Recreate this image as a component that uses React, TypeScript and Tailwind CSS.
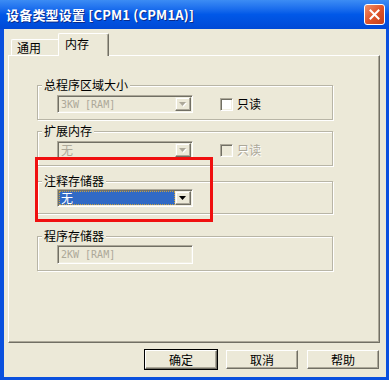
import React from 'react'

const ui = "font-['Noto_Sans_CJK_SC',sans-serif] text-[12px] leading-[16px]"
const mono = "font-['DejaVu_Sans_Mono',monospace] text-[10px]"

const DropArrow = ({ disabled }: { disabled?: boolean }) => (
  <div className="flex h-full w-[16px] items-center justify-center border border-t-[#F1EFE2] border-l-[#F1EFE2] border-b-[#716F64] border-r-[#716F64] bg-[#ECE9D8] shadow-[inset_-1px_-1px_0_#ACA899,inset_1px_1px_0_#fff]">
    <svg width="8" height="5" viewBox="0 0 8 5">
      {disabled && <path d="M1 1h7L4.5 5z" fill="#fff" />}
      <path d="M0 0h7L3.5 4z" fill={disabled ? '#ACA899' : '#000'} />
    </svg>
  </div>
)

const Sunken = ({ children, className }: { children: React.ReactNode; className?: string }) => (
  <div
    className={`flex border border-t-[#ACA899] border-l-[#ACA899] border-b-white border-r-white shadow-[inset_1px_1px_0_#716F64,inset_-1px_-1px_0_#F1EFE2] p-[1px] ${className ?? ''}`}
  >
    {children}
  </div>
)

const Combo = ({ value, disabled, focused }: { value: string; disabled?: boolean; focused?: boolean }) => (
  <Sunken className={`h-[18px] w-[136px] ${focused ? 'bg-white' : 'bg-[#ECE9D8]'}`}>
    {focused ? (
      <div className={`flex flex-1 items-center border border-dotted border-[#C8A040] bg-[#316AC5] pl-[1px] text-white ${ui}`}>
        {value}
      </div>
    ) : (
      <div className={`flex flex-1 items-center pl-[2px] text-[#ACA899] ${value.match(/[A-Z]/) ? mono : ui}`}>
        {value}
      </div>
    )}
    <DropArrow disabled={disabled} />
  </Sunken>
)

const Check = ({ disabled }: { disabled?: boolean }) => (
  <div className="flex items-center gap-[4px]">
    <div
      className={`h-[13px] w-[13px] border border-t-[#ACA899] border-l-[#ACA899] border-b-white border-r-white shadow-[inset_1px_1px_0_#716F64,inset_-1px_-1px_0_#F1EFE2] ${disabled ? 'bg-[#ECE9D8]' : 'bg-white'}`}
    />
    <span className={`${ui} ${disabled ? 'text-[#ACA899] [text-shadow:1px_1px_0_#fff]' : 'text-black'}`}>只读</span>
  </div>
)

const Group = ({ label, children, className }: { label: string; children: React.ReactNode; className?: string }) => (
  <fieldset
    className={`ml-[28px] w-[296px] border border-[#B8B5A6] shadow-[inset_1px_1px_0_#fff,1px_1px_0_#fff] ${className ?? ''}`}
  >
    <legend className={`ml-[4px] bg-[#ECE9D8] px-[2px] ${ui} text-black`}>{label}</legend>
    {children}
  </fieldset>
)

const Button = ({ label, def }: { label: string; def?: boolean }) => (
  <div className={def ? 'border border-black' : 'border border-transparent'}>
    <div
      className={`flex h-[19px] w-[72px] items-center justify-center border border-t-white border-l-white border-b-[#716F64] border-r-[#716F64] bg-[#ECE9D8] shadow-[inset_-1px_-1px_0_#ACA899] ${ui} text-black`}
    >
      {label}
    </div>
  </div>
)

export default function App() {
  return (
    <div className="flex h-[380px] w-[389px] flex-col bg-[#0A50DE]">
      <div className="flex h-[29px] items-center justify-between bg-linear-to-b from-[#3C8CF4] via-[#0158E8] to-[#0049D6] pl-[6px] pr-[4px]">
        <span className="font-['Noto_Sans_CJK_SC',sans-serif] text-[13px] font-bold tracking-[0.2px] text-white [text-shadow:1px_1px_0_#0A2A8A]">
          设备类型设置 [CPM1 (CPM1A)]
        </span>
        <div className="flex h-[21px] w-[21px] items-center justify-center rounded-[3px] border border-white bg-linear-to-br from-[#F0906A] via-[#E0542A] to-[#C0401C]">
          <svg width="11" height="11" viewBox="0 0 11 11">
            <path d="M1.5 1.5l8 8M9.5 1.5l-8 8" stroke="#fff" strokeWidth="2" strokeLinecap="square" />
          </svg>
        </div>
      </div>

      <div className="mb-[3px] ml-[4px] mr-[3px] flex flex-1 flex-col bg-[#ECE9D8]">
        <div className="flex items-end pl-[7px] pt-[4px]">
          <div className={`h-[16px] w-[47px] rounded-tl-[2px] border-l border-t border-white pl-[5px] ${ui} text-black`}>通用</div>
          <div
            className={`relative z-10 -mb-[1px] h-[23px] w-[51px] rounded-t-[2px] border-l border-r border-t border-l-white border-t-white border-r-[#716F64] bg-[#ECE9D8] pl-[6px] pt-[2px] shadow-[inset_-1px_0_0_#ACA899] ${ui} text-black`}
          >
            内存
          </div>
        </div>

        <div className="relative ml-[4px] mr-[6px] flex h-[288px] flex-col border border-b-[#716F64] border-l-white border-r-[#716F64] border-t-white pt-[21px] shadow-[inset_-1px_-1px_0_#ACA899]">
          <Group label="总程序区域大小" className="h-[43px]">
            <div className="flex items-center pl-[19px] pt-[2px]">
              <Combo value="3KW [RAM]" disabled />
              <div className="ml-[27px]">
                <Check />
              </div>
            </div>
          </Group>
          <Group label="扩展内存" className="mt-[3px] h-[43px]">
            <div className="flex items-center pl-[19px] pt-[2px]">
              <Combo value="无" disabled />
              <div className="ml-[27px]">
                <Check disabled />
              </div>
            </div>
          </Group>
          <Group label="注释存储器" className="mt-[7px] h-[41px]">
            <div className="flex items-center pl-[19px]">
              <Combo value="无" focused />
            </div>
          </Group>
          <Group label="程序存储器" className="mt-[14px] h-[43px]">
            <div className="flex items-center pl-[19px] pt-[1px]">
              <Sunken className="h-[19px] w-[136px] bg-[#ECE9D8]">
                <div className={`flex flex-1 items-center pl-[2px] text-[#ACA899] ${mono}`}>2KW [RAM]</div>
              </Sunken>
            </div>
          </Group>

          <div className="absolute left-[26px] top-[101px] h-[65px] w-[178px] border-[3px] border-[#F01010]" />
        </div>

        <div className="mr-[6px] mt-[6px] flex justify-end gap-[7px]">
          <Button label="确定" def />
          <Button label="取消" />
          <Button label="帮助" />
        </div>
      </div>
    </div>
  )
}
